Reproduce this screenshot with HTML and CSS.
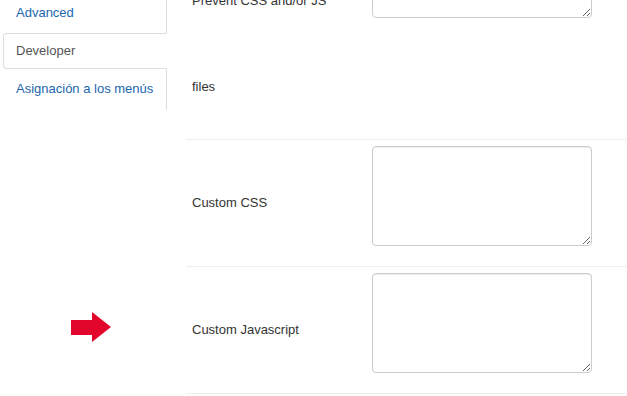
FILE: index.html
```html
<!DOCTYPE html>
<html lang="es">
<head>
    <meta charset="UTF-8">
    <meta name="viewport" content="width=device-width, initial-scale=1.0">
    <title>Template options - Developer</title>
    <link rel="stylesheet" href="styles.css">
</head>
<body>

<div class="tabs-left">
    <ul class="nav-tabs">
        <li><a href="#advanced">Advanced</a></li>
        <li class="active"><a href="#developer">Developer</a></li>
        <li><a href="#menus">Asignación a los menús</a></li>
    </ul>

    <div class="tab-content">
        <div class="control-group first">
            <label class="control-label label-split">
                <span>Prevent CSS and/or JS</span>
                <span class="tail">files</span>
            </label>
            <div class="controls"><textarea></textarea></div>
        </div>
        <div class="control-group">
            <label class="control-label">Custom CSS</label>
            <div class="controls"><textarea></textarea></div>
        </div>
        <div class="control-group">
            <label class="control-label">Custom Javascript</label>
            <div class="controls"><textarea></textarea></div>
        </div>
    </div>
</div>

<!-- pointer drawn over the screenshot -->
<svg class="pointer" width="40" height="30" viewBox="0 0 40 30">
    <polygon points="0,8 21,8 21,0 40,15 21,30 21,23 0,23" fill="#e2052c"/>
</svg>

</body>
</html>
```

FILE: styles.css
```css
body {
    font-family: 'Liberation Sans', Arial, sans-serif;
    font-size: 13px;
    line-height: 18px;
    color: #333333;
    background-color: #ffffff;
    margin: 0;
    padding: 0;
    overflow: hidden;
    height: 396px;
}
.tabs-left {
    display: flex;
    align-items: flex-start;
}
.nav-tabs {
    list-style: none;
    margin: -5px 19px 0 3px;
    padding: 0 0 1px 0;
    width: 163px;
    border-right: 1px solid #dddddd;
}
.nav-tabs li a {
    display: block;
    padding: 8px 12px;
    margin: 0 -1px 2px 0;
    border: 1px solid transparent;
    border-radius: 4px 0 0 4px;
    color: #2266b0;
    text-decoration: none;
    white-space: nowrap;
}
.nav-tabs li.active a {
    color: #555555;
    background-color: #ffffff;
    border-color: #dddddd;
    border-right-color: transparent;
}
.tab-content {
    flex: 1;
}
.control-group {
    display: flex;
    align-items: center;
    padding: 6px 0 20px 0;
    border-bottom: 1px solid #eeeeee;
}
.control-group.first {
    margin-top: -88px;
    padding-bottom: 43px;
    align-items: flex-start;
}
.control-label {
    width: 180px;
    padding-left: 6px;
    margin-top: 14px;
}
.label-split {
    display: flex;
    flex-direction: column;
    margin-top: 74px;
}
.label-split .tail {
    margin-top: 68px;
}
.controls textarea {
    display: block;
    box-sizing: border-box;
    width: 220px;
    height: 100px;
    margin: 0;
    padding: 4px 6px;
    border: 1px solid #cccccc;
    border-radius: 4px;
    box-shadow: inset 0 1px 1px rgba(0, 0, 0, 0.075);
    font-family: inherit;
    font-size: 13px;
}
.pointer {
    position: absolute;
    left: 71px;
    top: 312px;
}
```
